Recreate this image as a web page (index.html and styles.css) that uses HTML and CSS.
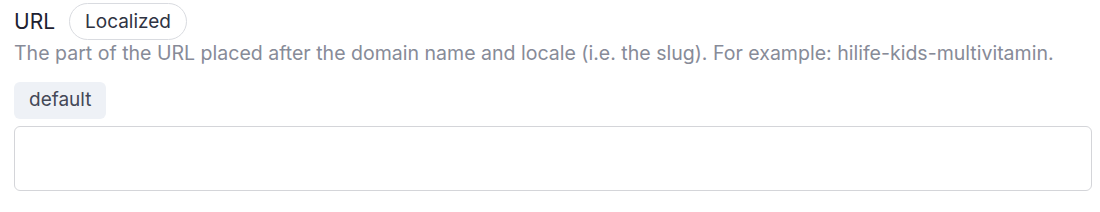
FILE: index.html
```html
<!DOCTYPE html>
<html lang="en">
<head>
  <meta charset="UTF-8">
  <title>URL field</title>
  <link rel="stylesheet" href="styles.css">
</head>
<body>
  <div class="field">
    <div class="field-head">
      <span class="field-label">URL</span>
      <span class="pill">Localized</span>
    </div>
    <p class="field-hint">The part of the URL placed after the domain name and locale (i.e. the slug). For example: hilife-kids-multivitamin.</p>
    <div class="locale-tabs">
      <span class="locale-tab">default</span>
    </div>
    <input class="field-input" type="text">
  </div>
</body>
</html>
```

FILE: styles.css
```css
body {
  margin: 0;
  padding: 0;
  background: white;
  font-family: 'Inter', 'Noto Sans', sans-serif;
}

.field {
  padding: 3px 8px 0 14px;
}

.field-head {
  display: flex;
  align-items: center;
  gap: 14px;
}

.field-label {
  font-size: 21px;
  color: #1d2130;
}

.pill {
  padding: 5px 15px;
  line-height: 25px;
  border: 1px solid #d9dbe0;
  border-radius: 999px;
  font-size: 19px;
  color: #2f3342;
}

.field-hint {
  margin: 1px 0 0;
  line-height: 24px;
  font-size: 19.55px;
  color: #878b98;
}

.locale-tabs {
  display: flex;
  margin-top: 17px;
}

.locale-tab {
  padding: 6px 15px 7px;
  line-height: 24px;
  background: #eef1f6;
  border-radius: 6px;
  font-size: 19px;
  color: #444857;
}

.field-input {
  display: block;
  box-sizing: border-box;
  width: 100%;
  height: 65px;
  margin-top: 7px;
  border: 1px solid #d4d5d9;
  border-radius: 6px;
  background: white;
}
```
